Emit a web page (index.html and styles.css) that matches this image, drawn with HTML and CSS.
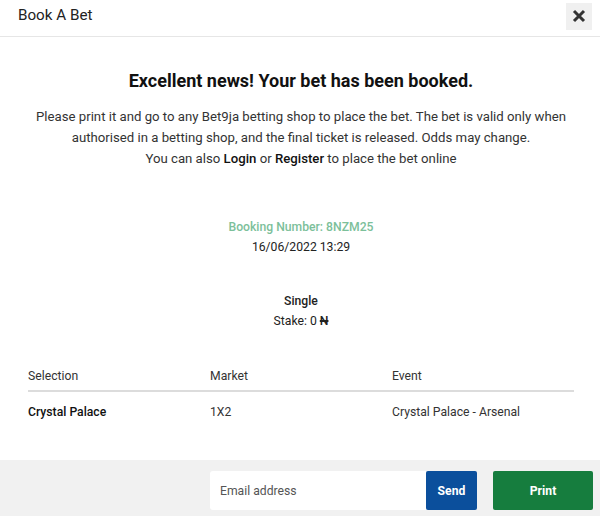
FILE: index.html
```html
<!DOCTYPE html>
<html>
<head>
<meta charset="utf-8">
<link rel="stylesheet" href="styles.css">
</head>
<body>
<div class="modal">
  <header class="head">
    <span class="title">Book A Bet</span>
    <button class="close" aria-label="Close">
      <svg width="14" height="14" viewBox="0 0 14 14"><path d="M2 2L12 12M12 2L2 12" stroke="#333" stroke-width="3" stroke-linecap="butt"/></svg>
    </button>
  </header>
  <main class="content">
    <h1 class="heading">Excellent news! Your bet has been booked.</h1>
    <p class="info">Please print it and go to any Bet9ja betting shop to place the bet. The bet is valid only when authorised in a betting shop, and the final ticket is released. Odds may change.<br>You can also <b>Login</b> or <b>Register</b> to place the bet online</p>
    <div class="booking">
      <div class="code">Booking Number: 8NZM25</div>
      <div class="date">16/06/2022 13:29</div>
    </div>
    <div class="stake">
      <div class="type">Single</div>
      <div>Stake: 0 <s>N</s></div>
    </div>
    <div class="table">
      <div class="row thead">
        <span>Selection</span><span>Market</span><span>Event</span>
      </div>
      <div class="row tbody">
        <span class="sel">Crystal Palace</span><span>1X2</span><span>Crystal Palace - Arsenal</span>
      </div>
    </div>
  </main>
  <footer class="foot">
    <div class="email">
      <input class="input" type="text" placeholder="Email address">
      <button class="send">Send</button>
    </div>
    <button class="print">Print</button>
  </footer>
</div>
</body>
</html>
```
FILE: styles.css
```css
* { box-sizing: border-box; }
html, body { margin: 0; padding: 0; background: #fff; }
body { font-family: Roboto, "Noto Sans", sans-serif; color: #222; width: 600px; height: 516px; overflow: hidden; }
.modal { display: flex; flex-direction: column; height: 516px; }
.head { height: 37px; border-bottom: 1px solid #e6e6e6; display: flex; align-items: center; justify-content: space-between; padding: 0 8px 0 18px; }
.title { font-size: 15.2px; color: #222; margin-top: -6px; }
.close { width: 26px; height: 27px; border: none; background: #f0f0f0; display: flex; align-items: center; justify-content: center; padding: 0; margin-top: -4px; }
.content { flex: 1; padding: 0 26px 0 28px; text-align: center; }
.heading { font-size: 18px; font-weight: 700; margin: 33px 0 0; line-height: 22px; color: #111; }
.info { font-size: 13.2px; line-height: 21px; color: #333; margin: 14px -16px 0; }
.info b { font-weight: 500; color: #111; }
.booking { margin-top: 48px; font-size: 12.2px; line-height: 20px; }
.code { color: #7cc09a; font-weight: 500; }
.date { color: #222; }
.stake { margin-top: 34px; font-size: 12.2px; line-height: 20px; color: #222; }
.type { font-weight: 500; }
.stake s { text-decoration-thickness: 1.5px; font-weight: 500; }
.table { margin-top: 32px; text-align: left; font-size: 12.2px; }
.row { display: grid; grid-template-columns: 182px 182px 1fr; }
.thead { height: 29px; align-items: center; border-bottom: 2px solid #dcdcdc; color: #333; padding-bottom: 2px; }
.tbody { height: 36px; align-items: center; color: #333; padding-top: 3px; }
.sel { font-weight: 500; color: #111; }
.foot { height: 56px; background: #f1f1f1; display: flex; align-items: flex-start; justify-content: flex-end; padding: 11px 7px 0 0; gap: 16px; }
.email { display: flex; height: 39px; }
.input { width: 216px; height: 39px; border: none; border-radius: 3px 0 0 3px; background: #fff; padding: 0 10px; font-family: Roboto, sans-serif; font-size: 12.2px; color: #333; outline: none; }
.input::placeholder { color: #555; }
.send { width: 51px; height: 39px; border: none; background: #0b4f9c; color: #fff; font-family: Roboto, sans-serif; font-weight: 700; font-size: 12.2px; border-radius: 2px; }
.print { width: 100px; height: 39px; border: none; background: #167d3e; color: #fff; font-family: Roboto, sans-serif; font-weight: 700; font-size: 12.2px; border-radius: 2px; }
```
